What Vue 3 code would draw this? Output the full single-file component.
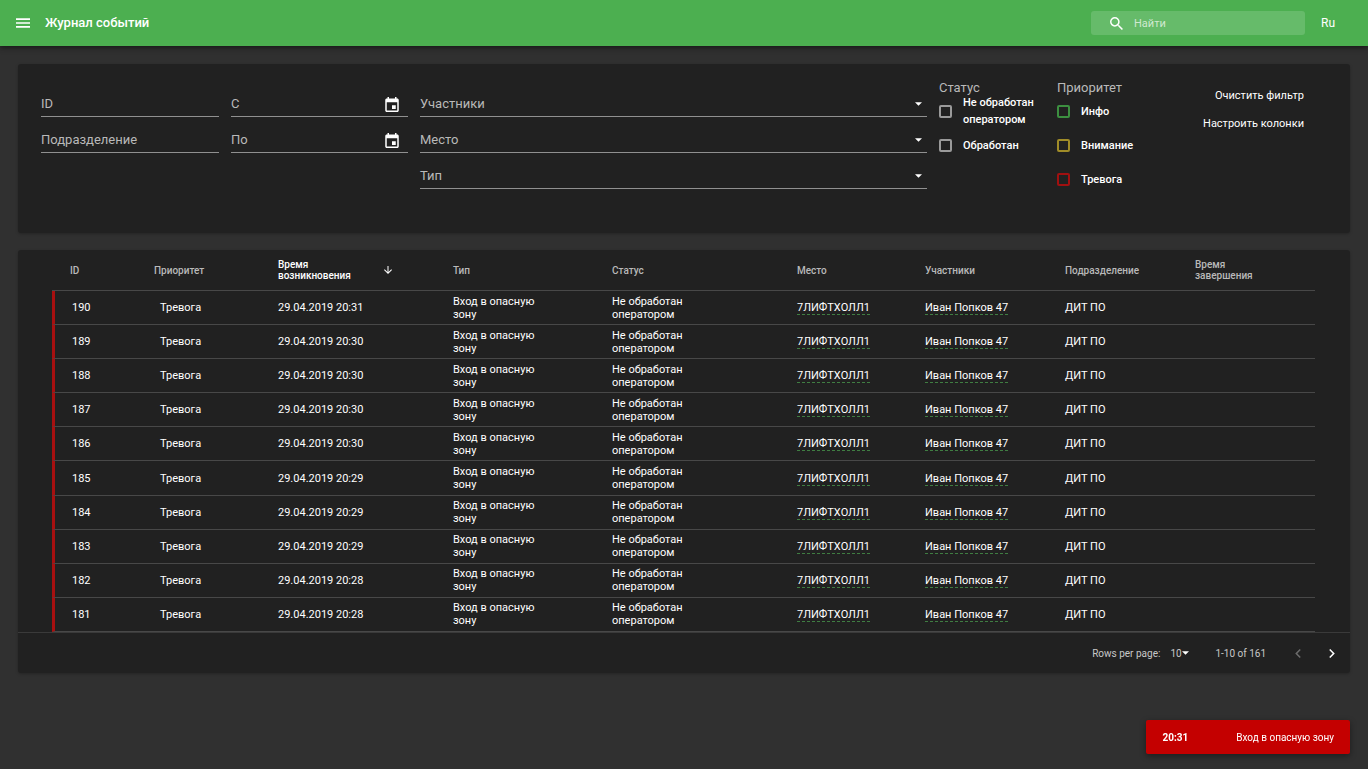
<script setup>
import { ref } from 'vue'

const search = ref('')
const unitId = ref('')
const department = ref('')
const dateFrom = ref('')
const dateTo = ref('')
const rowsPerPage = ref('10')

const selects = [
  { id: 'members', label: 'Участники' },
  { id: 'place', label: 'Место' },
  { id: 'type', label: 'Тип' },
]
const statuses = [
  { id: 'st-new', label: 'Не обработан оператором' },
  { id: 'st-done', label: 'Обработан' },
]
const priorities = [
  { id: 'pr-info', label: 'Инфо', tone: 'green' },
  { id: 'pr-warn', label: 'Внимание', tone: 'yellow' },
  { id: 'pr-alarm', label: 'Тревога', tone: 'red' },
]

const times = ['20:31', '20:30', '20:30', '20:30', '20:30', '20:29', '20:29', '20:29', '20:28', '20:28']
const rows = times.map((time, i) => ({ id: 190 - i, time: `29.04.2019 ${time}` }))
</script>

<template>
  <div class="page">
    <header class="bar">
      <button class="icon-btn" type="button" aria-label="Меню">
        <svg class="menu-icon" viewBox="0 0 18 12"><path d="M0 12h18v-2H0v2zm0-5h18V5H0v2zm0-7v2h18V0H0z" /></svg>
      </button>
      <h1 class="title">Журнал событий</h1>
      <label class="search">
        <svg class="search-icon" viewBox="3 3 17.5 17.5"><path d="M15.5 14h-.79l-.28-.27A6.47 6.47 0 0 0 16 9.5 6.5 6.5 0 1 0 9.5 16c1.61 0 3.09-.59 4.23-1.57l.27.28v.79l5 4.99L20.49 19l-4.99-5zm-6 0C7.01 14 5 11.99 5 9.5S7.01 5 9.5 5 14 7.01 14 9.5 11.99 14 9.5 14z" /></svg>
        <input v-model="search" class="search-input" type="text" placeholder="Найти" aria-label="Найти" />
      </label>
      <button class="lang" type="button">Ru</button>
    </header>

    <main class="content">
      <section class="card filters">
        <div class="fields">
          <div class="field">
            <label for="f-id">ID</label>
            <input id="f-id" v-model="unitId" type="text" />
          </div>
          <div class="field">
            <label for="f-dep">Подразделение</label>
            <input id="f-dep" v-model="department" type="text" />
          </div>
        </div>
        <div class="fields">
          <div class="field date">
            <label for="f-from">С</label>
            <input id="f-from" v-model="dateFrom" type="text" />
            <button class="icon-btn calendar" type="button" aria-label="С">
              <svg viewBox="3 1 18 20"><path d="M17 12h-5v5h5v-5zM16 1v2H8V1H6v2H5c-1.11 0-1.99.9-1.99 2L3 19c0 1.1.89 2 2 2h14c1.1 0 2-.9 2-2V5c0-1.1-.9-2-2-2h-1V1h-2zm3 18H5V8h14v11z" /></svg>
            </button>
          </div>
          <div class="field date">
            <label for="f-to">По</label>
            <input id="f-to" v-model="dateTo" type="text" />
            <button class="icon-btn calendar" type="button" aria-label="По">
              <svg viewBox="3 1 18 20"><path d="M17 12h-5v5h5v-5zM16 1v2H8V1H6v2H5c-1.11 0-1.99.9-1.99 2L3 19c0 1.1.89 2 2 2h14c1.1 0 2-.9 2-2V5c0-1.1-.9-2-2-2h-1V1h-2zm3 18H5V8h14v11z" /></svg>
            </button>
          </div>
        </div>
        <div class="fields">
          <div v-for="s in selects" :key="s.id" class="field pick">
            <label :for="s.id">{{ s.label }}</label>
            <select :id="s.id"><option value=""></option></select>
            <svg class="caret" viewBox="0 0 10 5"><path d="M0 0l5 5 5-5z" /></svg>
          </div>
        </div>
        <fieldset class="checks">
          <legend>Статус</legend>
          <label v-for="s in statuses" :key="s.id" class="check" :for="s.id">
            <input :id="s.id" type="checkbox" /><span>{{ s.label }}</span>
          </label>
        </fieldset>
        <fieldset class="checks">
          <legend>Приоритет</legend>
          <label v-for="p in priorities" :key="p.id" class="check" :class="p.tone" :for="p.id">
            <input :id="p.id" type="checkbox" /><span>{{ p.label }}</span>
          </label>
        </fieldset>
        <div class="actions">
          <button type="button">Очистить фильтр</button>
          <button type="button">Настроить колонки</button>
        </div>
      </section>

      <section class="card">
        <div class="table-wrap">
          <table>
            <colgroup>
              <col class="c-id" /><col class="c-priority" /><col class="c-start" /><col class="c-type" /><col class="c-status" />
              <col class="c-place" /><col class="c-members" /><col class="c-dep" /><col class="c-end" />
            </colgroup>
            <thead>
              <tr>
                <th class="h-id">ID</th>
                <th>Приоритет</th>
                <th class="sorted">
                  <div class="sort">
                    <span>Время<br />возникновения</span>
                    <svg viewBox="4 4 16 16"><path d="M20 12l-1.41-1.41L13 16.17V4h-2v12.17l-5.58-5.59L4 12l8 8 8-8z" /></svg>
                  </div>
                </th>
                <th>Тип</th>
                <th>Статус</th>
                <th>Место</th>
                <th>Участники</th>
                <th>Подразделение</th>
                <th>Время<br />завершения</th>
              </tr>
            </thead>
            <tbody>
              <tr v-for="r in rows" :key="r.id">
                <td class="alarm">{{ r.id }}</td>
                <td class="priority">Тревога</td>
                <td>{{ r.time }}</td>
                <td><div class="wrap">Вход в опасную зону</div></td>
                <td><div class="wrap">Не обработан оператором</div></td>
                <td><a href="#">7ЛИФТХОЛЛ1</a></td>
                <td><a href="#">Иван Попков 47</a></td>
                <td>ДИТ ПО</td>
                <td></td>
              </tr>
            </tbody>
          </table>
        </div>
        <footer class="pager">
          <label for="per-page">Rows per page:</label>
          <div class="per-page">
            <select id="per-page" v-model="rowsPerPage"><option>10</option><option>25</option></select>
            <svg class="caret" viewBox="0 0 10 5"><path d="M0 0l5 5 5-5z" /></svg>
          </div>
          <span class="range">1-10 of 161</span>
          <button class="icon-btn nav" type="button" aria-label="Назад" disabled>
            <svg viewBox="8 6 7.41 12"><path d="M15.41 7.41L14 6l-6 6 6 6 1.41-1.41L10.83 12z" /></svg>
          </button>
          <button class="icon-btn nav" type="button" aria-label="Вперёд">
            <svg viewBox="8.59 6 7.41 12"><path d="M10 6L8.59 7.41 13.17 12l-4.58 4.59L10 18l6-6z" /></svg>
          </button>
        </footer>
      </section>
    </main>

    <div class="toast" role="alert">
      <strong>20:31</strong>
      <span>Вход в опасную зону</span>
    </div>
  </div>
</template>

<style>
body {
  margin: 0;
  background: #303030;
}
</style>

<style scoped>
.page {
  min-height: 100vh;
  color: #fff;
  font-family: Roboto, "Noto Sans", sans-serif;
  font-size: 11px;
}
.page * {
  box-sizing: border-box;
}
button, input, select {
  margin: 0;
  padding: 0;
  border: 0;
  border-radius: 0;
  outline: 0;
  background: none;
  color: inherit;
  font: inherit;
  appearance: none;
}
svg {
  display: block;
  fill: currentColor;
}
.icon-btn {
  display: flex;
  align-items: center;
  justify-content: center;
}

.bar {
  position: relative;
  display: flex;
  align-items: center;
  height: 46px;
  padding: 0 33px 0 16px;
  background: #4caf50;
  box-shadow: 0 2px 4px rgba(0, 0, 0, 0.35), 0 1px 8px rgba(0, 0, 0, 0.2);
}
.menu-icon {
  width: 14px;
  height: 10px;
}
.title {
  flex: 1;
  margin: 0 0 0 15px;
  font-size: 13px;
  font-weight: 500;
  line-height: 20px;
}
.search {
  display: flex;
  align-items: center;
  gap: 11px;
  width: 214px;
  height: 24px;
  padding: 0 8px 0 19px;
  border-radius: 3px;
  background: rgba(255, 255, 255, 0.15);
}
.search-icon {
  flex: none;
  width: 13px;
  height: 13px;
}
.search-input {
  flex: 1;
  min-width: 0;
}
.search-input::placeholder {
  color: rgba(255, 255, 255, 0.7);
  opacity: 1;
}
.lang {
  margin-left: 16px;
  font-size: 12px;
}

.content {
  display: flex;
  flex-direction: column;
  gap: 17px;
  padding: 18px;
}
.card {
  border-radius: 3px;
  background: #212121;
  box-shadow: 0 1px 3px rgba(0, 0, 0, 0.25);
}

.filters {
  display: grid;
  grid-template-columns: 178fr 177fr 507fr 106fr 106fr 129fr;
  gap: 12px;
  min-height: 169px;
  padding: 17px 46px 17px 23px;
}
.field {
  display: grid;
  grid-template-columns: 1fr auto;
  align-items: center;
  height: 36px;
  padding-top: 11px;
  border-bottom: 1px solid #909090;
  color: #b9b9b9;
  font-size: 13px;
  line-height: 20px;
}
.field label {
  grid-area: 1 / 1;
  pointer-events: none;
}
.field input, .field select {
  grid-area: 1 / 1 / 2 / 3;
  width: 100%;
  height: 20px;
}
.calendar, .field .caret {
  grid-area: 1 / 2;
  color: #fff;
}
.calendar {
  margin-right: 9px;
}
.calendar svg {
  width: 14px;
  height: 15px;
}
.caret {
  width: 7px;
  height: 4px;
  pointer-events: none;
}
.field .caret {
  margin-right: 5px;
}

.checks {
  min-width: 0;
  margin: 0;
  padding: 0;
  border: 0;
}
.checks legend {
  padding: 0;
  color: #b9b9b9;
  font-size: 13px;
  line-height: 13px;
}
.check {
  display: flex;
  align-items: center;
  gap: 11px;
  height: 34px;
  font-weight: 500;
  line-height: 17px;
}
.check input {
  flex: none;
  width: 13px;
  height: 13px;
  border: 2px solid #9a9a9a;
  border-radius: 2px;
}
.check.green input {
  border-color: #3c8f40;
}
.check.yellow input {
  border-color: #a08c28;
}
.check.red input {
  border-color: #a01010;
}
.actions {
  display: flex;
  flex-direction: column;
  align-items: flex-end;
}
.actions button {
  height: 28px;
  font-size: 11px;
  white-space: nowrap;
}

.table-wrap {
  padding: 0 35px 0 34px;
}
table {
  width: 100%;
  height: 382px;
  border-collapse: separate;
  border-spacing: 0;
  table-layout: fixed;
}
.c-id { width: 102px; }
.c-priority { width: 124px; }
.c-start { width: 175px; }
.c-type { width: 159px; }
.c-status { width: 185px; }
.c-place { width: 128px; }
.c-members { width: 140px; }
.c-dep { width: 130px; }
.c-end { width: 120px; }
th, td {
  padding: 0;
  border-bottom: 1px solid #484848;
  text-align: left;
  vertical-align: middle;
}
th {
  height: 41px;
  color: #b9b9b9;
  font-size: 10px;
  font-weight: 500;
  line-height: 11px;
}
th.h-id {
  padding-left: 18px;
}
th.sorted {
  color: #fff;
}
.sort {
  display: flex;
  align-items: center;
  justify-content: space-between;
  padding-right: 61px;
}
.sort svg {
  width: 8px;
  height: 8px;
}
td {
  height: 34px;
  line-height: 13px;
}
td.alarm {
  padding-left: 17px;
  border-left: 3px solid #a81010;
}
td.priority {
  padding-left: 6px;
}
.wrap {
  width: 90px;
}
td a {
  border-bottom: 1px dashed #3f7d42;
  color: inherit;
  text-decoration: none;
}

.pager {
  display: flex;
  align-items: center;
  justify-content: flex-end;
  height: 41px;
  padding-right: 8px;
  border-top: 1px solid #3a3a3a;
  color: #c8c8c8;
  font-size: 10px;
}
.per-page {
  display: flex;
  align-items: center;
  margin: 0 26px 0 10px;
}
.per-page .caret {
  color: #fff;
}
.range {
  margin-right: 22px;
}
.nav {
  width: 20px;
  height: 20px;
  margin-left: 14px;
  color: #fff;
}
.nav:first-of-type {
  margin-left: 0;
}
.nav:disabled {
  color: #6c6c6c;
}
.nav svg {
  width: 6px;
  height: 9px;
}

.toast {
  position: fixed;
  right: 18px;
  bottom: 15px;
  display: flex;
  align-items: center;
  gap: 48px;
  height: 34px;
  padding: 0 16px;
  border-radius: 2px;
  background: #c40000;
  box-shadow: 0 2px 6px rgba(0, 0, 0, 0.4);
  font-size: 10px;
}
</style>
